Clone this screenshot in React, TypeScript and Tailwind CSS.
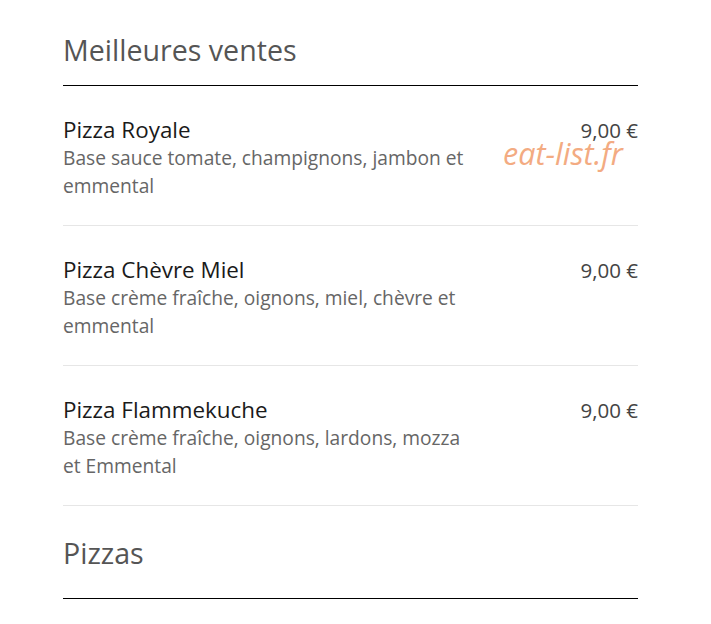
const items = [
  {
    name: "Pizza Royale",
    desc: "Base sauce tomate, champignons, jambon et emmental",
    price: "9,00 €",
  },
  {
    name: "Pizza Chèvre Miel",
    desc: "Base crème fraîche, oignons, miel, chèvre et emmental",
    price: "9,00 €",
  },
  {
    name: "Pizza Flammekuche",
    desc: "Base crème fraîche, oignons, lardons, mozza et Emmental",
    price: "9,00 €",
  },
];

export default function App() {
  return (
    <div
      className="relative min-h-[624px] w-[711px] bg-white"
      style={{ fontFamily: '"Open Sans", "DejaVu Sans", sans-serif' }}
    >
      <div className="ml-[63px] w-[575px]">
        <h2 className="pt-[32px] pb-[17px] text-[28.6px] leading-[36px] text-[#555] border-b border-black">
          Meilleures ventes
        </h2>

        <ul>
          {items.map((item) => (
            <li
              key={item.name}
              className="flex justify-between pt-[30px] pb-[25px] border-b border-[#e6e6e6]"
            >
              <div className="w-[406px]">
                <div className="text-[22.4px] leading-[28px] text-[#1a1a1a]">{item.name}</div>
                <p className="text-[19.2px] leading-[28px] text-[#666]">{item.desc}</p>
              </div>
              <div className="text-[20.5px] leading-[28px] text-[#444]">{item.price}</div>
            </li>
          ))}
        </ul>

        <h2 className="pt-[29px] pb-[27px] text-[28.6px] leading-[36px] text-[#555] border-b border-black">
          Pizzas
        </h2>
      </div>

      <span className="absolute left-[503px] top-[135px] text-[30.5px] leading-[36px] italic text-[#f3ab82]">
        eat-list.fr
      </span>
    </div>
  );
}
